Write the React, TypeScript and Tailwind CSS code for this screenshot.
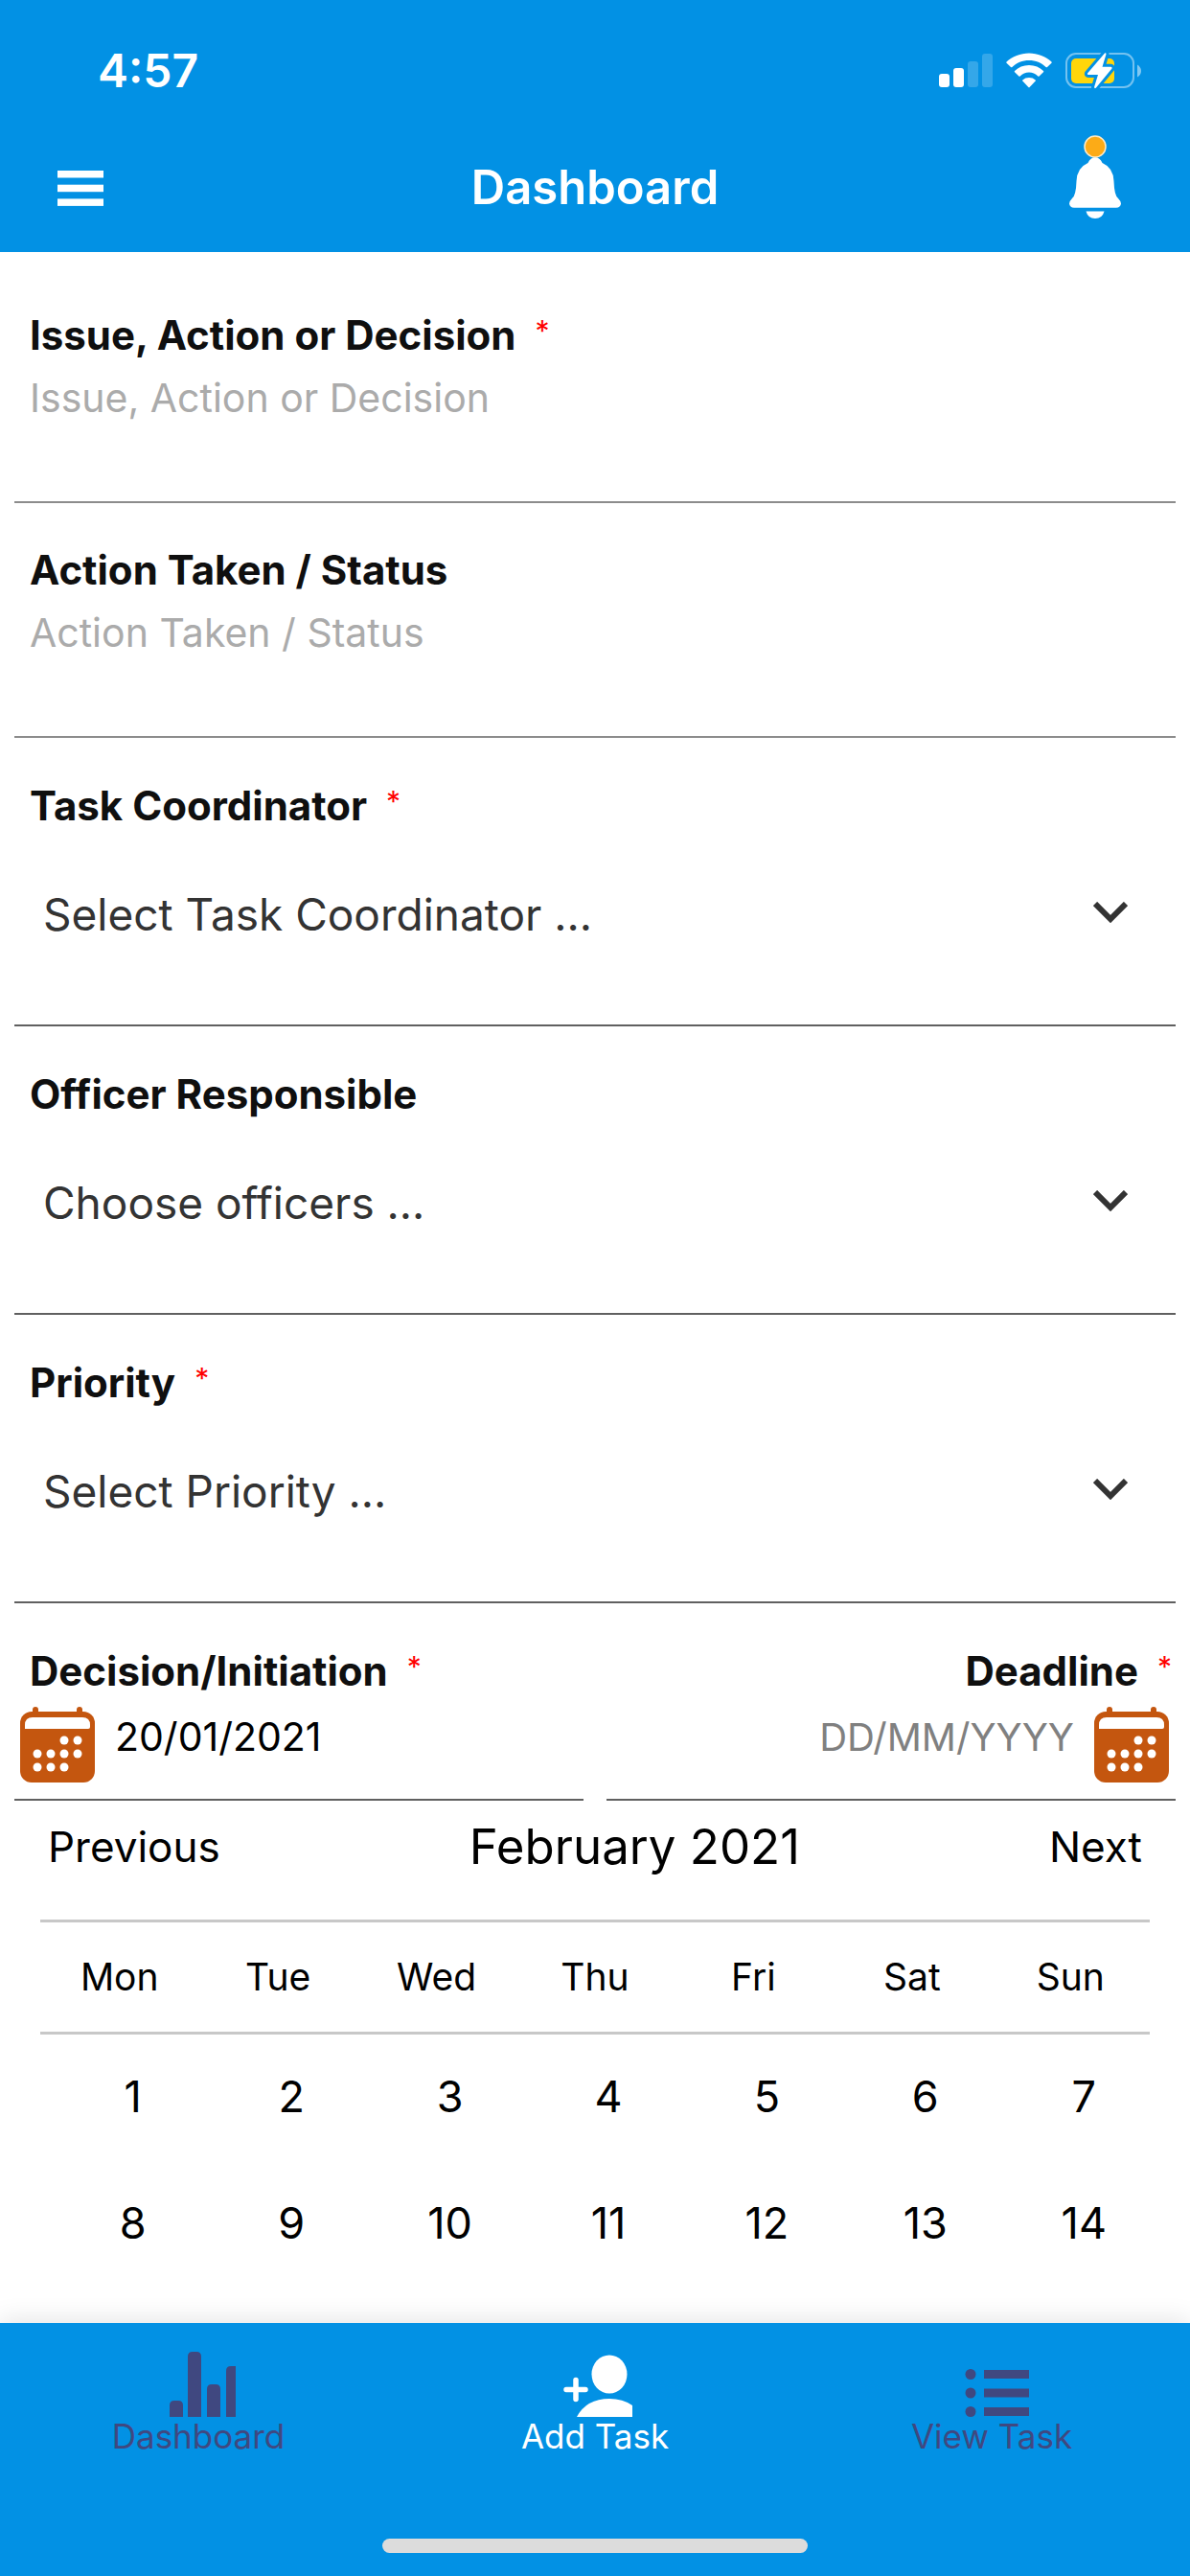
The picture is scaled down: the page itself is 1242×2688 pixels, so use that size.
import React from "react";

const weekDays = ["Mon", "Tue", "Wed", "Thu", "Fri", "Sat", "Sun"];
const weeks = [
  [1, 2, 3, 4, 5, 6, 7],
  [8, 9, 10, 11, 12, 13, 14],
];

function Required() {
  return (
    <span className="ml-5 text-[30px] leading-[42px] font-normal text-[#ff0000]">*</span>
  );
}

function TextField({
  id,
  label,
  required,
}: {
  id: string;
  label: string;
  required?: boolean;
}) {
  return (
    <div className="border-b-2 border-[#8c8c8c] px-4 pt-11 pb-[81px]">
      <label
        htmlFor={id}
        className="flex text-[42px] leading-[52px] font-bold text-[#0f0f0f]"
      >
        {label}
        {required && <Required />}
      </label>
      <input
        id={id}
        type="text"
        placeholder={label}
        className="mt-[14px] block h-[52px] w-full text-[41px] outline-none placeholder:text-[#ababab]"
      />
    </div>
  );
}

function SelectField({
  id,
  label,
  placeholder,
  required,
}: {
  id: string;
  label: string;
  placeholder: string;
  required?: boolean;
}) {
  return (
    <div className="border-b-2 border-[#606060] px-4 pt-[45px] pb-[51px]">
      <label
        htmlFor={id}
        className="flex text-[42px] leading-[52px] font-bold text-[#0f0f0f]"
      >
        {label}
        {required && <Required />}
      </label>
      <div className="relative mt-[23px]">
        <select
          id={id}
          className="h-32 w-full appearance-none bg-transparent px-[14px] text-[46px] text-[#333333] outline-none"
        >
          <option>{placeholder}</option>
        </select>
        <svg
          className="pointer-events-none absolute top-[51px] right-[34px] h-[22px] w-9"
          viewBox="0 0 36 22"
          fill="none"
          stroke="#333333"
          strokeWidth="6"
        >
          <path d="M2 2 L18 18 L34 2" />
        </svg>
      </div>
    </div>
  );
}

function CalendarIcon() {
  return (
    <svg className="h-20 w-20" viewBox="0 0 80 80">
      <g fill="#c4560f">
        <rect x="14" y="1" width="6" height="14" rx="3" />
        <rect x="60" y="1" width="6" height="14" rx="3" />
        <rect x="1" y="6" width="78" height="74" rx="12" />
      </g>
      <g fill="#fff">
        <path d="M6 24 V20 Q6 12 14 12 H66 Q74 12 74 20 V22 Q74 24 72 24 Z" />
        <circle cx="47" cy="36" r="4.5" />
        <circle cx="61" cy="36" r="4.5" />
        <circle cx="19" cy="50" r="4.5" />
        <circle cx="33" cy="50" r="4.5" />
        <circle cx="47" cy="50" r="4.5" />
        <circle cx="61" cy="50" r="4.5" />
        <circle cx="19" cy="64" r="4.5" />
        <circle cx="33" cy="64" r="4.5" />
        <circle cx="47" cy="64" r="4.5" />
      </g>
    </svg>
  );
}

function StatusBar() {
  return (
    <div className="flex h-[148px] items-center justify-between pr-[50px] pl-[102px]">
      <span className="text-[48px] leading-[60px] font-semibold">4:57</span>
      <div className="flex items-center gap-[14px]">
        <svg className="h-10 w-14" viewBox="0 0 56 40" fill="#fff">
          <rect x="0" y="23" width="11" height="14" rx="3" />
          <rect x="15" y="17" width="11" height="20" rx="3" />
          <rect x="30" y="10" width="11" height="27" rx="3" opacity="0.2" />
          <rect x="45" y="2" width="11" height="35" rx="3" opacity="0.2" />
        </svg>
        <svg className="h-10 w-12" viewBox="0 0 48 40" fill="#fff">
          <path d="M24 1.5 C33 1.5 41.500 5 47.500 10.500 Q48 11.200 47.500 11.800 L43 16 Q42.300 16.500 41.600 16 C37 11.500 31 9 24 9 C17 9 11 11.500 6.400 16 Q5.700 16.500 5 16 L0.500 11.800 Q0 11.200 0.500 10.500 C6.500 5 15 1.500 24 1.500 Z" />
          <path d="M24 14 C30 14 35 16.300 39 20 Q39.600 20.700 39 21.300 L34.600 25.500 Q34 26 33.300 25.500 C30.700 23 27.500 21.500 24 21.500 C20.500 21.500 17.300 23 14.700 25.500 Q14 26 13.400 25.500 L9 21.300 Q8.400 20.700 9 20 C13 16.300 18 14 24 14 Z" />
          <path d="M24 27 Q28 27 30.700 29.400 Q31 30 30.700 30.600 L24.600 37 Q24 37.500 23.400 37 L17.300 30.600 Q17 30 17.300 29.400 Q20 27 24 27 Z" />
        </svg>
        <svg className="h-10 w-20" viewBox="0 0 80 40">
          <rect
            x="1"
            y="2"
            width="70"
            height="35"
            rx="10"
            fill="none"
            stroke="#fff"
            strokeOpacity="0.45"
            strokeWidth="2"
          />
          <rect x="6" y="7" width="45" height="26" rx="5" fill="#ffd60a" />
          <path d="M75 13.500 Q79 16 79 20 Q79 24 75 26.500 Z" fill="#fff" fillOpacity="0.5" />
          <path
            d="M41 1.500 L23 22.500 Q22.500 24 24 24 H34 L30 37 Q30.500 39 32 37.500 L48.500 17.500 Q49 16 47.500 15.800 H38.500 L42.500 2.500 Q42.500 0.500 41 1.500 Z"
            fill="#fff"
            stroke="#0291e4"
            strokeWidth="6"
            paintOrder="stroke"
          />
        </svg>
      </div>
    </div>
  );
}

export default function App() {
  return (
    <div className="flex min-h-screen flex-col bg-white font-['Inter','Liberation_Sans',sans-serif] text-black">
      <header className="bg-[#0291e4] text-white">
        <StatusBar />
        <div className="grid h-[115px] grid-cols-[1fr_auto_1fr] items-start">
          <button aria-label="Menu" className="ml-[60px] justify-self-start pt-[30px]">
            <svg className="h-[37px] w-12" viewBox="0 0 48 37" fill="#fff">
              <rect width="48" height="7.500" />
              <rect y="14.700" width="48" height="7.500" />
              <rect y="29.400" width="48" height="7.500" />
            </svg>
          </button>
          <h1 className="pt-[18px] text-[49px] leading-[60px] font-semibold">Dashboard</h1>
          <button aria-label="Notifications" className="mr-[71px] justify-self-end">
            <svg className="h-[90px] w-14 overflow-visible" viewBox="0 0 56 90">
              <path
                d="M28 16 Q33 16.500 35.500 22 Q47 27 47.500 41 Q48 56 52 59 Q55 62 55 64.500 Q54.500 68.500 50 68.800 H6 Q1.500 68.500 1 64.500 Q1 62 4 59 Q8 56 8.500 41 Q9 27 20.500 22 Q23 16.500 28 16 Z"
                fill="#fff"
              />
              <path d="M18.500 72.500 H37.500 Q35.500 80 28 80 Q20.500 80 18.500 72.500 Z" fill="#fff" />
              <circle cx="28" cy="5" r="11" fill="#fcab17" stroke="#fdebc8" strokeWidth="1.500" />
            </svg>
          </button>
        </div>
      </header>

      <main className="flex-1 pt-[17px]">
        <form className="mx-[15px]">
          <TextField id="issue" label="Issue, Action or Decision" required />
          <TextField id="status" label="Action Taken / Status" />
          <SelectField
            id="coordinator"
            label="Task Coordinator"
            placeholder="Select Task Coordinator ..."
            required
          />
          <SelectField id="officer" label="Officer Responsible" placeholder="Choose officers ..." />
          <SelectField id="priority" label="Priority" placeholder="Select Priority ..." required />

          <div className="grid grid-cols-2 gap-6">
            <div className="border-b-2 border-[#606060] pt-[45px] pb-[17px]">
              <label
                htmlFor="decision"
                className="flex pl-4 text-[42px] leading-[52px] font-bold text-[#0f0f0f]"
              >
                Decision/Initiation
                <Required />
              </label>
              <div className="mt-[10px] flex items-start gap-5 pl-[5px]">
                <button type="button" aria-label="Pick decision date">
                  <CalendarIcon />
                </button>
                <input
                  id="decision"
                  type="text"
                  defaultValue="20/01/2021"
                  className="h-16 w-full min-w-0 text-[41px] outline-none"
                />
              </div>
            </div>
            <div className="border-b-2 border-[#606060] pt-[45px] pb-[17px]">
              <label
                htmlFor="deadline"
                className="flex justify-end pr-1 text-[42px] leading-[52px] font-bold text-[#0f0f0f]"
              >
                Deadline
                <Required />
              </label>
              <div className="mt-[10px] flex items-start gap-5 pr-[6px]">
                <input
                  id="deadline"
                  type="text"
                  placeholder="DD/MM/YYYY"
                  className="h-16 w-full min-w-0 text-right text-[40px] outline-none placeholder:text-[#808080]"
                />
                <button type="button" aria-label="Pick deadline date">
                  <CalendarIcon />
                </button>
              </div>
            </div>
          </div>
        </form>

        <section>
          <div className="flex items-center justify-between px-[50px] pt-[18px] pb-[46px]">
            <button className="text-[44px] leading-[60px]">Previous</button>
            <h2 className="text-[51px] leading-[60px]">February 2021</h2>
            <button className="text-[44px] leading-[60px]">Next</button>
          </div>
          <div className="mx-[42px]">
            <table className="w-full table-fixed border-collapse">
              <thead>
                <tr className="h-[117px] border-y-3 border-[#c8c8c8]">
                  {weekDays.map((day) => (
                    <th key={day} className="text-[39px] font-normal">
                      {day}
                    </th>
                  ))}
                </tr>
              </thead>
              <tbody>
                {weeks.map((week) => (
                  <tr key={week[0]} className="h-[132px]">
                    {week.map((day) => (
                      <td key={day} className="pl-7 text-center">
                        <button className="text-[45px] leading-[60px]">{day}</button>
                      </td>
                    ))}
                  </tr>
                ))}
              </tbody>
            </table>
          </div>
        </section>
      </main>

      <nav className="bg-[#0291e4] pt-[30px] text-[35px] leading-[40px] text-[#404880] shadow-[0_-4px_24px_rgba(0,0,0,0.1)]">
        <div className="grid h-[195px] grid-cols-3 items-start">
          <a href="#dashboard" className="flex flex-col items-center">
            <svg className="h-[68px] w-20" viewBox="0 0 80 68" fill="currentColor">
              <path d="M10 68 V56 Q10 51 15 51 H19 Q24 51 24 56 V68 Z" />
              <path d="M29 68 V5 Q29 0 34 0 H38 Q43 0 43 5 V68 Z" />
              <path d="M49 68 V39 Q49 34 54 34 H58 Q63 34 63 39 V68 Z" />
              <path d="M69 68 V20 Q69 15 74 15 H79 V68 Z" />
            </svg>
            <span>Dashboard</span>
          </a>
          <a href="#add" className="flex flex-col items-center text-white">
            <svg className="h-[68px] w-20" viewBox="0 0 80 68" fill="currentColor">
              <ellipse cx="55" cy="23.500" rx="18.500" ry="20" />
              <path d="M21 68 Q31 49 55 49 Q69 49 79 56 V68 Z" />
              <path
                d="M10 39.500 H30 M20 29.500 V49.500"
                stroke="currentColor"
                strokeWidth="5.500"
                strokeLinecap="round"
              />
            </svg>
            <span>Add Task</span>
          </a>
          <a href="#view" className="flex flex-col items-center">
            <svg className="h-[68px] w-20" viewBox="0 0 80 68" fill="currentColor">
              <circle cx="18" cy="23.500" r="5.500" />
              <circle cx="18" cy="43" r="5.500" />
              <circle cx="18" cy="62.500" r="5.500" />
              <rect x="32" y="19" width="47" height="9" />
              <rect x="32" y="38.500" width="47" height="9" />
              <rect x="32" y="58" width="47" height="9" />
            </svg>
            <span>View Task</span>
          </a>
        </div>
        <div className="mx-auto mb-6 h-[15px] w-[444px] rounded-full bg-[#dcdcdc]" />
      </nav>
    </div>
  );
}
